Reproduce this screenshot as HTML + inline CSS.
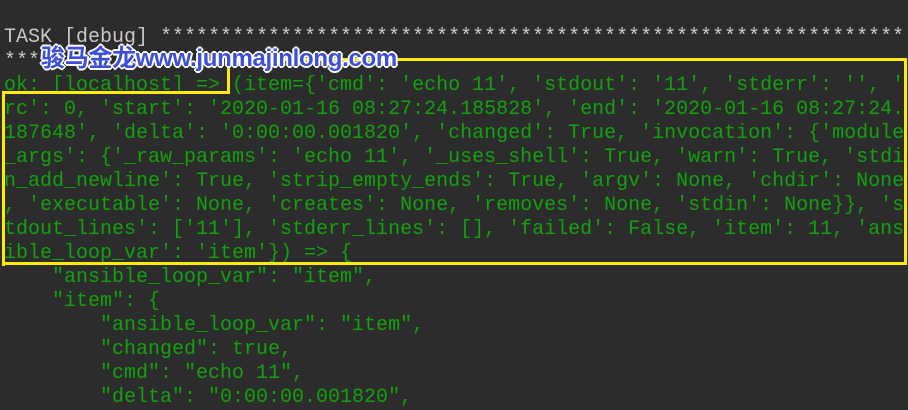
<!DOCTYPE html>
<html><head><meta charset="utf-8"><style>
html,body{margin:0;padding:0;width:908px;height:404px;overflow:hidden;background:#2c2c2c;}
pre{position:absolute;left:4px;top:26px;margin:0;font-family:"Liberation Mono",monospace;font-size:20px;line-height:24px;color:#13a10e;white-space:pre;}
.g{color:#c8c8c8;}
.box{position:absolute;background:#ffec00;}
.wm{position:absolute;left:41px;top:38px;font-family:"Liberation Sans","Noto Sans CJK SC",sans-serif;font-weight:bold;font-size:24px;color:#3d4fd6;text-shadow:1px 1px 0 #fff,-1px -1px 0 #fff,1px -1px 0 #fff,-1px 1px 0 #fff,2px 0 0 #fff,-2px 0 0 #fff,0 2px 0 #fff,0 -2px 0 #fff;white-space:nowrap;letter-spacing:-0.3px;}
</style></head><body>
<pre><span class="g">TASK [debug] **************************************************************
***</span>
ok: [localhost] =&gt; (item={'cmd': 'echo 11', 'stdout': '11', 'stderr': '', '
rc': 0, 'start': '2020-01-16 08:27:24.185828', 'end': '2020-01-16 08:27:24.
187648', 'delta': '0:00:00.001820', 'changed': True, 'invocation': {'module
_args': {'_raw_params': 'echo 11', '_uses_shell': True, 'warn': True, 'stdi
n_add_newline': True, 'strip_empty_ends': True, 'argv': None, 'chdir': None
, 'executable': None, 'creates': None, 'removes': None, 'stdin': None}}, 's
tdout_lines': ['11'], 'stderr_lines': [], 'failed': False, 'item': 11, 'ans
ible_loop_var': 'item'}) =&gt; {
    "ansible_loop_var": "item",
    "item": {
        "ansible_loop_var": "item",
        "changed": true,
        "cmd": "echo 11",
        "delta": "0:00:00.001820",</pre>
<div class="box" style="left:227px;top:58px;width:680px;height:3px"></div>
<div class="box" style="left:227px;top:58px;width:3px;height:36px"></div>
<div class="box" style="left:2px;top:91px;width:228px;height:3px"></div>
<div class="box" style="left:2px;top:91px;width:3px;height:175px"></div>
<div class="box" style="left:904px;top:58px;width:3px;height:207px"></div>
<div class="box" style="left:2px;top:262px;width:905px;height:3px"></div>
<div class="wm">骏马金龙www.junmajinlong.com</div>
</body></html>
